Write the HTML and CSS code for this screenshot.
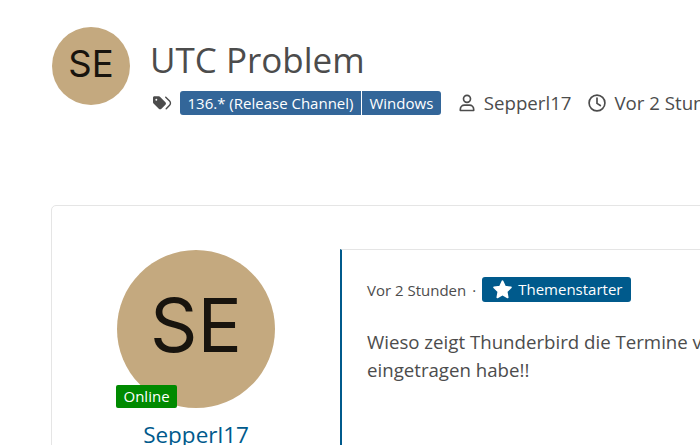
FILE: index.html
```html
<!DOCTYPE html>
<html>

<head>
    <title>UTC Problem</title>
    <link rel="stylesheet" href="styles.css">
</head>

<body>
    <div class="page">
        <div class="topic-header">
            <div class="avatar avatar-small">SE</div>
            <div class="topic-info">
                <h1 class="topic-title">UTC Problem</h1>
                <div class="topic-meta">
                    <svg class="tags-icon" viewBox="0 0 640 512" width="19" height="16">
                        <path fill="#4c4c4c" d="M0 80V229.500c0 17 6.700 33.300 18.700 45.300l176 176c25 25 65.500 25 90.500 0L418.700 317.300c25-25 25-65.500 0-90.500l-176-176c-12-12-28.300-18.700-45.300-18.700H48C21.500 32 0 53.500 0 80zm112 32a32 32 0 1 1 0 64 32 32 0 1 1 0-64z"/>
                        <path fill="#4c4c4c" d="M412.100 41.400c9.400-9.300 24.600-9.200 33.900.2L575.500 172.500c48.900 49.500 48.900 129.100 0 178.600L462.100 466c-9.300 9.400-24.500 9.500-33.900.2s-9.500-24.500-.2-33.900L541.300 317.400c30.900-31.300 30.900-81.500 0-112.800L412 75.300c-9.300-9.400-9.200-24.600.1-33.900z"/>
                    </svg>
                    <div class="tag-group">
                        <span class="tag">136.* (Release Channel)</span>
                        <span class="tag">Windows</span>
                    </div>
                    <span class="meta-item">
                        <svg viewBox="0 0 24 24" width="20" height="20" fill="none" stroke="#4c4c4c" stroke-width="2">
                            <circle cx="12" cy="7" r="4.200"/>
                            <path d="M4 21v-1.500c0-3 2.300-5 5-5h6c2.700 0 5 2 5 5V21z" stroke-linejoin="round"/>
                        </svg>
                        Sepperl17
                    </span>
                    <span class="meta-item">
                        <svg viewBox="0 0 24 24" width="20" height="20" fill="none" stroke="#4c4c4c" stroke-width="2" stroke-linecap="round" stroke-linejoin="round">
                            <circle cx="12" cy="12" r="9.500"/>
                            <path d="M12 6v6.500l4 2.500"/>
                        </svg>
                        Vor 2 Stunden
                    </span>
                </div>
            </div>
        </div>

        <div class="post-card">
            <div class="post-author">
                <div class="avatar-wrap">
                    <div class="avatar avatar-large">SE</div>
                    <span class="online-badge">Online</span>
                </div>
                <a class="author-name" href="#">Sepperl17</a>
            </div>
            <div class="post-main">
                <div class="post-meta">
                    <span>Vor 2 Stunden</span>
                    <span class="meta-dot">·</span>
                    <span class="starter-badge">
                        <svg viewBox="0 0 24 24" width="21" height="21">
                            <path fill="#fff" stroke="#fff" stroke-width="2" stroke-linejoin="round" d="M12 2.500l2.900 6.200 6.700.9-4.900 4.700 1.200 6.700-5.900-3.300L6.100 21l1.200-6.700L2.400 9.600l6.700-.9z"/>
                        </svg>
                        Themenstarter
                    </span>
                </div>
                <p class="post-text">Wieso zeigt Thunderbird die Termine v<br>eingetragen habe!!</p>
            </div>
        </div>
    </div>
</body>

</html>
```

FILE: styles.css
```css
html,
body {
    margin: 0;
    padding: 0;
    height: 445px;
    overflow: hidden;
}

body {
    font-family: "Open Sans", sans-serif;
    background-color: #fff;
    color: #4c4c4c;
}

.page {
    width: 1000px;
    padding: 27px 0 0 51px;
}

.avatar {
    display: flex;
    justify-content: center;
    align-items: center;
    flex-shrink: 0;
    box-sizing: border-box;
    border-radius: 50%;
    background-color: #c4a97f;
    color: #18140e;
    font-family: Inter, "Liberation Sans", sans-serif;
}

.avatar-small {
    width: 78px;
    height: 78px;
    margin-left: 1px;
    padding-bottom: 4px;
    font-size: 36.500px;
}

.avatar-large {
    width: 158px;
    height: 158px;
    padding-bottom: 8px;
    font-size: 74px;
}

/* Topic header */
.topic-header {
    display: flex;
    gap: 20px;
    height: 178px;
}

.topic-title {
    margin: 8px 0 0;
    font-size: 35px;
    font-weight: 400;
    line-height: 49px;
}

.topic-meta {
    display: flex;
    align-items: center;
    margin: 6px 0 0 3px;
    font-size: 18.67px;
    white-space: nowrap;
}

.tags-icon {
    margin-right: 8px;
}

.tag-group {
    display: flex;
    gap: 1px;
    margin-right: 16px;
}

.tag {
    padding: 0 7.5px;
    background-color: #336699;
    color: #fff;
    font-size: 15px;
    line-height: 24px;
}

.tag:first-child {
    border-radius: 3px 0 0 3px;
}

.tag:last-child {
    border-radius: 0 3px 3px 0;
}

.meta-item {
    display: flex;
    align-items: center;
    gap: 7px;
    margin-right: 16px;
}

/* Post */
.post-card {
    display: flex;
    height: 400px;
    border: 1px solid #e5e5e5;
    border-radius: 5px;
    box-sizing: border-box;
    padding: 43px 0 0;
}

.post-author {
    display: flex;
    flex-direction: column;
    align-items: center;
    width: 288px;
    padding-top: 1px;
}

.avatar-wrap {
    position: relative;
}

.online-badge {
    position: absolute;
    left: -1px;
    bottom: 0;
    padding: 0 7.5px;
    background-color: #008a00;
    border-radius: 2px;
    color: #fff;
    font-size: 15px;
    line-height: 23px;
}

.author-name {
    margin-top: 12px;
    color: #005a8c;
    font-size: 22.500px;
    line-height: 30px;
    text-decoration: none;
}

.post-main {
    flex: 1;
    border-left: 2px solid #005a8c;
    border-top: 1px solid #e5e5e5;
    padding: 27px 0 0 25px;
}

.post-meta {
    display: flex;
    align-items: center;
    gap: 6px;
    font-size: 15px;
}

.starter-badge {
    display: flex;
    align-items: center;
    gap: 5px;
    padding: 0 9px 0 10px;
    background-color: #005a8c;
    border-radius: 3px;
    color: #fff;
    line-height: 25px;
}

.post-text {
    margin: 26px 0 0;
    font-size: 18.67px;
    line-height: 28px;
}
```
